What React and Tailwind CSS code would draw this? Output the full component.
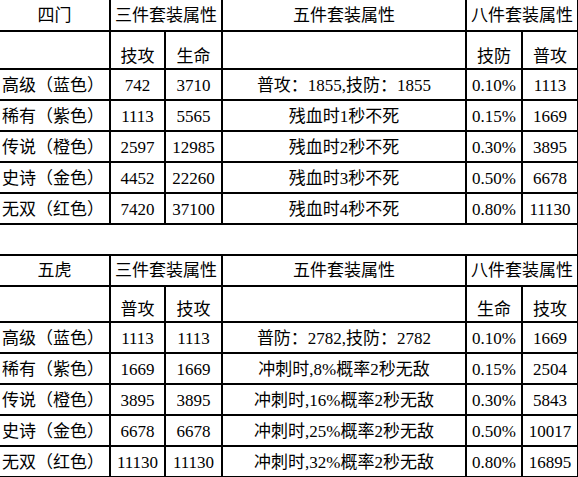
import React from "react";

const font = {
  fontFamily: '"Liberation Serif", "Noto Sans CJK SC", serif',
};

const sets = [
  {
    name: "四门",
    three: ["技攻", "生命"],
    eight: ["技防", "普攻"],
    rows: [
      ["高级（蓝色）", "742", "3710", "普攻：1855,技防：1855", "0.10%", "1113"],
      ["稀有（紫色）", "1113", "5565", "残血时1秒不死", "0.15%", "1669"],
      ["传说（橙色）", "2597", "12985", "残血时2秒不死", "0.30%", "3895"],
      ["史诗（金色）", "4452", "22260", "残血时3秒不死", "0.50%", "6678"],
      ["无双（红色）", "7420", "37100", "残血时4秒不死", "0.80%", "11130"],
    ],
  },
  {
    name: "五虎",
    three: ["普攻", "技攻"],
    eight: ["生命", "技攻"],
    rows: [
      ["高级（蓝色）", "1113", "1113", "普防：2782,技防：2782", "0.10%", "1669"],
      ["稀有（紫色）", "1669", "1669", "冲刺时,8%概率2秒无敌", "0.15%", "2504"],
      ["传说（橙色）", "3895", "3895", "冲刺时,16%概率2秒无敌", "0.30%", "5843"],
      ["史诗（金色）", "6678", "6678", "冲刺时,25%概率2秒无敌", "0.50%", "10017"],
      ["无双（红色）", "11130", "11130", "冲刺时,32%概率2秒无敌", "0.80%", "16895"],
    ],
  },
];

const cell = "border-2 border-black p-0 text-center whitespace-nowrap";
const first = "border-2 border-l-0 border-black p-0 whitespace-nowrap";

function SetBlock({ set, top }) {
  return (
    <>
      <tr className="h-[31px]">
        <td className={`${first} text-center ${top ? "border-t-0" : ""}`}>{set.name}</td>
        <td className={`${cell} ${top ? "border-t-0" : ""}`} colSpan={2}>三件套装属性</td>
        <td className={`${cell} ${top ? "border-t-0" : ""}`}>五件套装属性</td>
        <td className={`${cell} ${top ? "border-t-0" : ""}`} colSpan={2}>八件套装属性</td>
      </tr>
      <tr className={top ? "h-[38px]" : "h-[36px]"}>
        <td className={first}></td>
        <td className={`${cell} align-bottom pb-[3px]`}>{set.three[0]}</td>
        <td className={`${cell} align-bottom pb-[3px]`}>{set.three[1]}</td>
        <td className={cell}></td>
        <td className={`${cell} align-bottom pb-[3px]`}>{set.eight[0]}</td>
        <td className={`${cell} align-bottom pb-[3px]`}>{set.eight[1]}</td>
      </tr>
      {set.rows.map((r) => (
        <tr key={r[0]} className="h-[31px]">
          <td className={`${first} pl-[2px] pt-[2px]`}>{r[0]}</td>
          {r.slice(1).map((v, i) => (
            <td key={i} className={`${cell} pt-[2px]`}>
              {v}
            </td>
          ))}
        </tr>
      ))}
    </>
  );
}

export default function App() {
  return (
    <div className="w-[578px] h-[477px] overflow-hidden bg-white text-black text-[17px] leading-none" style={font}>
      <table className="w-[578px] table-fixed border-collapse">
        <colgroup>
          <col className="w-[110px]" />
          <col className="w-[55px]" />
          <col className="w-[57px]" />
          <col className="w-[244px]" />
          <col className="w-[56px]" />
          <col className="w-[56px]" />
        </colgroup>
        <tbody>
          <SetBlock set={sets[0]} top />
          <tr className="h-[31px]">
            <td className="border-2 border-l-0 border-black p-0" colSpan={6}></td>
          </tr>
          <SetBlock set={sets[1]} />
        </tbody>
      </table>
    </div>
  );
}
